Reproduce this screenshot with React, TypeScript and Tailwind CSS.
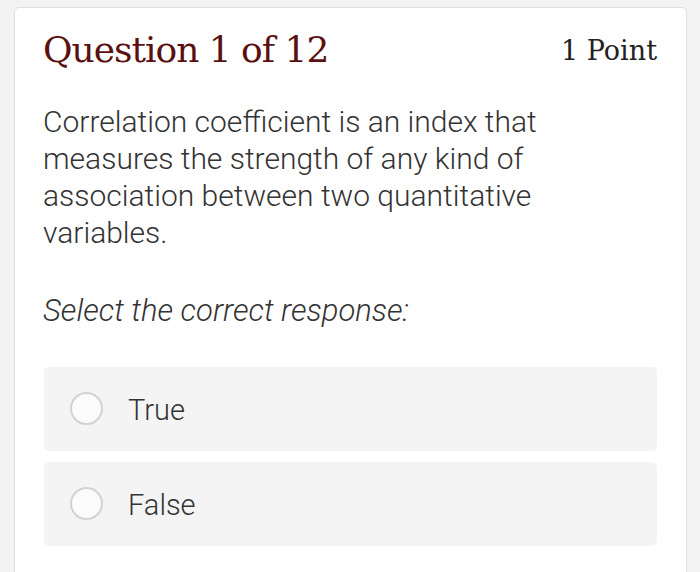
import { useState } from "react";

const options = ["True", "False"];

export default function App() {
  const [picked, setPicked] = useState<string | null>(null);

  return (
    <div className="h-[572px] overflow-hidden bg-[#f3f3f3] pt-[7px] pl-[14px] pr-[13px]">
      <div className="h-[600px] rounded-[5px] border border-[#dedede] bg-white pl-[28px] pr-[29px] pt-[19px]">
        {/* 标题 */}
        <div className="flex items-baseline justify-between">
          <h1 className="font-['Roboto_Slab','DejaVu_Serif',serif] text-[36px] leading-[46px] tracking-[-1px] text-[#5a1010]">
            Question 1 of 12
          </h1>
          <span className="-translate-y-[2px] font-['Roboto_Slab','DejaVu_Serif',serif] text-[27px] text-[#222]">
            1 Point
          </span>
        </div>

        <p className="mt-[29px] w-[540px] font-['Roboto',sans-serif] text-[30px] font-light leading-[37px] text-[#333]">
          Correlation coefficient is an index that measures the strength of any kind of association between two quantitative variables.
        </p>

        <p className="mt-[41px] font-['Roboto',sans-serif] text-[31px] font-light italic leading-[37px] text-[#333]">
          Select the correct response:
        </p>

        {/* 选项 */}
        <div className="mt-[38px] flex flex-col gap-[11px] pl-px">
          {options.map((o) => (
            <button
              key={o}
              onClick={() => setPicked(o)}
              className="flex h-[84px] items-center rounded-[5px] bg-[#f4f4f4] pl-[26px] text-left"
            >
              <span className="flex h-[33px] w-[33px] items-center justify-center rounded-full border-2 border-[#d2d2d2] bg-[#fbfbfb]">
                {picked === o && <span className="h-[15px] w-[15px] rounded-full bg-[#5a1010]" />}
              </span>
              <span className="ml-[25px] translate-y-[2px] font-['Roboto',sans-serif] text-[29px] font-light text-[#333]">
                {o}
              </span>
            </button>
          ))}
        </div>
      </div>
    </div>
  );
}
